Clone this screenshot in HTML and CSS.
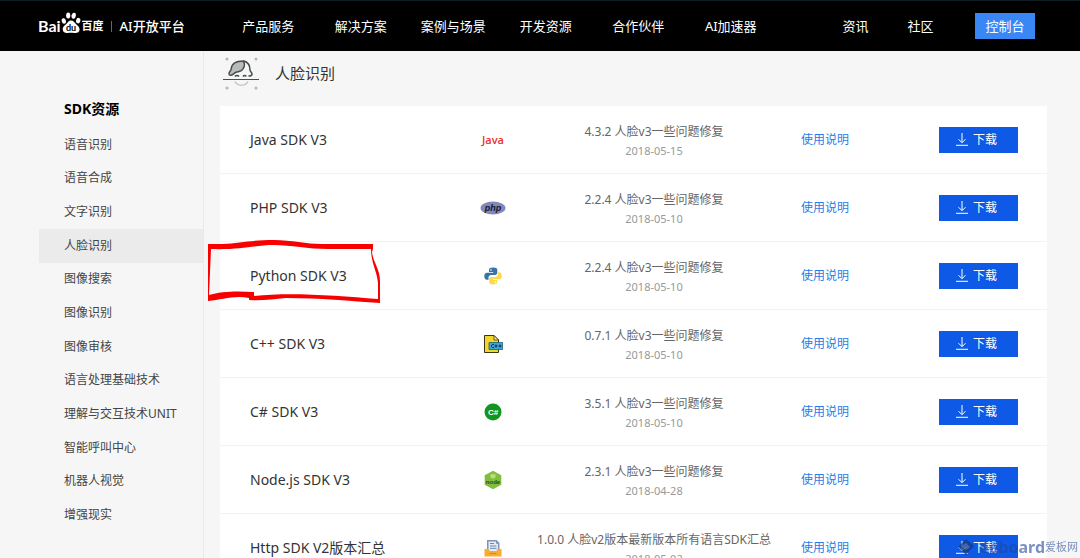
FILE: index.html
```html
<!DOCTYPE html>
<html lang="zh-CN">
<head>
<meta charset="utf-8">
<title>SDK资源 - 人脸识别</title>
<link rel="stylesheet" href="styles.css">
</head>
<body>
<header class="topbar">
  <a class="brand" href="#">
    <span class="brand-latin">Bai</span>
    <svg class="paw" width="20" height="22" viewBox="0 0 20 22" aria-hidden="true">
      <g fill="#fff">
        <ellipse cx="2.8" cy="9" rx="2.1" ry="2.8" transform="rotate(-15 2.8 9)"/>
        <ellipse cx="7.2" cy="3.6" rx="2.1" ry="3"/>
        <ellipse cx="12.7" cy="3.8" rx="2.1" ry="3" transform="rotate(12 12.7 3.8)"/>
        <ellipse cx="17.2" cy="8.6" rx="2.1" ry="2.8" transform="rotate(15 17.2 8.6)"/>
        <path d="M10 8.500c-2.500 0-3.200 2.200-5 3.700-2.300 1.900-3.700 3.200-3.200 5.800.5 2.600 2.600 3.100 4.900 2.900 2.300-.3 4.300-.3 6.600 0 2.800.3 5-.5 5.300-3.200.2-2.700-1.900-4-3.700-5.700-1.500-1.500-2.400-3.500-4.900-3.500z"/>
      </g>
      <text class="paw-text" x="10" y="19" text-anchor="middle">du</text>
    </svg>
    <span class="brand-cn">百度</span>
    <span class="brand-rule"></span>
    <span class="brand-sub">AI开放平台</span>
  </a>
  <nav class="nav">
    <a href="#">产品服务</a><a href="#">解决方案</a><a href="#">案例与场景</a><a href="#">开发资源</a><a href="#">合作伙伴</a><a href="#">AI加速器</a>
  </nav>
  <nav class="nav-side">
    <a href="#">资讯</a><a href="#">社区</a>
  </nav>
  <button class="console" type="button">控制台</button>
</header>

<div class="layout">
  <aside class="sidebar">
    <h2 class="side-title">SDK资源</h2>
    <ul class="side-list">
      <li><a href="#">语音识别</a></li>
      <li><a href="#">语音合成</a></li>
      <li><a href="#">文字识别</a></li>
      <li><a class="active" href="#">人脸识别</a></li>
      <li><a href="#">图像搜索</a></li>
      <li><a href="#">图像识别</a></li>
      <li><a href="#">图像审核</a></li>
      <li><a href="#">语言处理基础技术</a></li>
      <li><a href="#">理解与交互技术UNIT</a></li>
      <li><a href="#">智能呼叫中心</a></li>
      <li><a href="#">机器人视觉</a></li>
      <li><a href="#">增强现实</a></li>
    </ul>
  </aside>

  <main class="content">
    <div class="heading">
      <svg width="38" height="36" viewBox="0 0 38 36" aria-hidden="true">
        <g fill="#b5b7b8"><circle cx="5" cy="4" r="1.5"/><circle cx="34" cy="4" r="1.5"/><circle cx="5" cy="33" r="1.5"/><circle cx="34" cy="33" r="1.5"/></g>
        <path d="M7 18.500c0-2 2-2.500 2.200-4.500C9.500 9 13 6 21.500 6c2.500 5-.5 10.500-6.500 11-3 .3-4 3.500-6.500 3.300-1 0-1.500-.8-1.500-1.800z" fill="#b6bcbc" stroke="#4a4c4d" stroke-width="1.5"/>
        <path d="M22 6c4 1.200 6 4.500 6 9 .2 1.800 2.200 2.500 2 4.300-.2 1.500-1.700 1.700-3.500 1.700M13 21.500c.8-1.200 3-1.200 4 0M21 21.500c.8-1.200 2.500-1.200 3.300 0" fill="none" stroke="#4a4c4d" stroke-width="1.5"/>
        <path d="M1 24.500h36" stroke="#4a4c4d" stroke-width="1.2"/>
        <path d="M13 26.500c2.500 5 10.500 5 13 0" fill="none" stroke="#b9bbbc" stroke-width="1.2"/>
      </svg>
      <h1>人脸识别</h1>
    </div>

    <ul class="panel">
      <li class="row">
        <h3>Java SDK V3</h3>
        <span class="icon"><span class="java">Java</span></span>
        <div class="info"><p>4.3.2 人脸v3一些问题修复</p><time>2018-05-15</time></div>
        <a class="doc" href="#">使用说明</a>
        <button class="download" type="button"><svg class="arrow" viewBox="0 0 12 13"><path d="M6 0v9.500M2.500 6.200L6 9.700l3.500-3.500M0 12.300h12"/></svg>下载</button>
      </li>
      <li class="row">
        <h3>PHP SDK V3</h3>
        <span class="icon"><svg width="26" height="14" viewBox="0 0 26 14"><ellipse cx="13" cy="7" rx="12.5" ry="6.5" fill="#8288b8"/><text class="php" x="13" y="10" text-anchor="middle">php</text></svg></span>
        <div class="info"><p>2.2.4 人脸v3一些问题修复</p><time>2018-05-10</time></div>
        <a class="doc" href="#">使用说明</a>
        <button class="download" type="button"><svg class="arrow" viewBox="0 0 12 13"><path d="M6 0v9.500M2.500 6.200L6 9.700l3.500-3.500M0 12.300h12"/></svg>下载</button>
      </li>
      <li class="row">
        <h3>Python SDK V3</h3>
        <span class="icon"><svg width="18" height="18" viewBox="0 0 18 18"><path d="M9 .5C6 .5 5 1.500 5 3v2h4.300v.8H3C1.200 5.800.3 7.200.3 9.200s1 3.500 2.500 3.500H4.500v-2c0-1.600 1.200-2.700 2.700-2.700h4c1.200 0 2.100-1 2.100-2.200V3C13.300 1.300 12 .5 9 .5z" fill="#3773a8"/><path d="M9.200 17.500c3 0 4-1 4-2.500v-2H8.900v-.8h6.300c1.800 0 2.600-1.400 2.600-3.400s-1-3.500-2.500-3.500h-1.400v2c0 1.600-1.200 2.800-2.700 2.800h-4c-1.200 0-2.100 1-2.100 2.200V15c0 1.700 1.300 2.500 4.100 2.500z" fill="#ffd94d"/><circle cx="7" cy="3" r=".8" fill="#fff"/><circle cx="11.3" cy="15" r=".8" fill="#fff"/></svg></span>
        <div class="info"><p>2.2.4 人脸v3一些问题修复</p><time>2018-05-10</time></div>
        <a class="doc" href="#">使用说明</a>
        <button class="download" type="button"><svg class="arrow" viewBox="0 0 12 13"><path d="M6 0v9.500M2.500 6.200L6 9.700l3.500-3.500M0 12.300h12"/></svg>下载</button>
        <svg class="mark" width="176" height="66" viewBox="0 0 176 66" aria-hidden="true"><path d="M1 5h14C34 4 44 1 67 1c18 0 32 4 48 4h51v5l-1 3c1 10 8 17 8 29v22c-30-2-60-5-94-5-13 1-24 3-37 2v-2C27 56 15 61 1 62zM4 10L2 56c12-4 30-4 45-3v4c38-4 84 0 124 3V44c-1-12-7-20-7-34h-43C101 10 84 6 67 6 47 6 34 11 4 10z" fill="#f90000" fill-rule="evenodd"/></svg>
      </li>
      <li class="row">
        <h3>C++ SDK V3</h3>
        <span class="icon"><svg width="20" height="20" viewBox="0 0 20 20"><path d="M1.500 1.500h9.500l4.500 4.500v12.500h-14z" fill="#f4d52b" stroke="#3b3616" stroke-width="1"/><path d="M11 1.500V6h4.500z" fill="#fff0a0" stroke="#3b3616" stroke-width=".8"/><path d="M6 8.500h13.500v7H6z" fill="#39a9dc" stroke="#174c69" stroke-width=".7"/><path d="M11 10.500c-3-1-3.800 3.800 0 3M11.500 12h3M13 10.500v3M15.500 12h3M17 10.500v3" fill="none" stroke="#102b3a" stroke-width="1"/></svg></span>
        <div class="info"><p>0.7.1 人脸v3一些问题修复</p><time>2018-05-10</time></div>
        <a class="doc" href="#">使用说明</a>
        <button class="download" type="button"><svg class="arrow" viewBox="0 0 12 13"><path d="M6 0v9.500M2.500 6.200L6 9.700l3.500-3.500M0 12.300h12"/></svg>下载</button>
      </li>
      <li class="row">
        <h3>C# SDK V3</h3>
        <span class="icon"><svg width="18" height="18" viewBox="0 0 18 18"><circle cx="9" cy="9" r="8.5" fill="#119620"/><text class="csharp" x="9" y="12" text-anchor="middle">C#</text></svg></span>
        <div class="info"><p>3.5.1 人脸v3一些问题修复</p><time>2018-05-10</time></div>
        <a class="doc" href="#">使用说明</a>
        <button class="download" type="button"><svg class="arrow" viewBox="0 0 12 13"><path d="M6 0v9.500M2.500 6.200L6 9.700l3.500-3.500M0 12.300h12"/></svg>下载</button>
      </li>
      <li class="row">
        <h3>Node.js SDK V3</h3>
        <span class="icon"><svg width="18" height="20" viewBox="0 0 18 20"><path d="M9 .8l8.300 4.500v9.400L9 19.200.7 14.700V5.300z" fill="#83bd3c"/><path d="M6.500 4.200h5v3l-2.500 1.500-2.500-1.500z" fill="#b9df85"/><text class="node" x="9" y="14" text-anchor="middle">node</text></svg></span>
        <div class="info"><p>2.3.1 人脸v3一些问题修复</p><time>2018-04-28</time></div>
        <a class="doc" href="#">使用说明</a>
        <button class="download" type="button"><svg class="arrow" viewBox="0 0 12 13"><path d="M6 0v9.500M2.500 6.200L6 9.700l3.500-3.500M0 12.300h12"/></svg>下载</button>
      </li>
      <li class="row">
        <h3>Http SDK V2版本汇总</h3>
        <span class="icon"><svg width="18" height="18" viewBox="0 0 18 18"><path d="M3 1h9.500L15.500 4v9H3z" fill="#8094b8"/><path d="M4.500 2.500H12v2.300h2V12H4.500z" fill="#e5ebf5"/><path d="M6 4.500h4M6 7h6.500M6 9.300h6.500" stroke="#7087b0" stroke-width="1"/><path d="M.5 10h4l1.200 2h6.600l1.200-2h4v7.500H.5z" fill="#f6ae31"/><path d="M5.500 14.500h7" stroke="#d9871f" stroke-width="1.2"/></svg></span>
        <div class="info"><p>1.0.0 人脸v2版本最新版本所有语言SDK汇总</p><time>2018-05-02</time></div>
        <a class="doc" href="#">使用说明</a>
        <button class="download" type="button"><svg class="arrow" viewBox="0 0 12 13"><path d="M6 0v9.500M2.500 6.200L6 9.700l3.500-3.500M0 12.300h12"/></svg>下载</button>
      </li>
    </ul>
  </main>
</div>

<div class="watermark">
  <svg width="18" height="18" viewBox="0 0 18 18" aria-hidden="true"><path d="M9 1l8 7-8 9-8-8z" fill="#1d376f"/><path d="M5 8l4-3 4 4-4 3z" fill="#52709f"/></svg>
  <span class="watermark-latin">eeboard</span><span>爱板网</span>
</div>
</body>
</html>
```

FILE: styles.css
```css
* { box-sizing: border-box; }

body {
  margin: 0;
  height: 100vh;
  overflow: hidden;
  display: flex;
  flex-direction: column;
  background: #f6f6f6;
  color: #333;
  font-family: "Noto Sans", "Noto Sans CJK SC", sans-serif;
  font-size: 12px;
  line-height: 18px;
}

h1, h2, h3, p, ul { margin: 0; padding: 0; font-weight: 400; }
ul { list-style: none; }
a { color: inherit; text-decoration: none; }
button { border: 0; padding: 0; font: inherit; color: #fff; cursor: pointer; }
svg { display: block; flex: none; }

.topbar {
  flex: none;
  display: flex;
  align-items: center;
  height: 51px;
  padding: 0 45px 0 38px;
  border-top: 1px solid #0b1c24;
  background: #000;
  color: #fff;
  font-size: 13px;
}
.brand { display: flex; align-items: center; width: 184px; white-space: nowrap; }
.brand-latin { font: 700 16px/20px Lato, sans-serif; }
.paw { margin-bottom: 6px; }
.paw-text { font: 700 9px Lato, sans-serif; fill: #000; }
.brand-cn { margin-left: 1px; font-weight: 700; font-size: 11px; }
.brand-rule { width: 1px; height: 11px; margin: 0 8px 0 7px; background: #666; }
.brand-sub { font-weight: 500; }

.nav { flex: 1; display: grid; grid-template-columns: repeat(6, 1fr); text-align: center; }
.nav-side { display: grid; grid-template-columns: 65px 65px; margin-left: 46px; text-align: center; }
.console { width: 60px; height: 26px; margin-left: 22px; background: #3887f5; }

.layout { flex: 1; min-height: 0; display: flex; }
.sidebar { flex: none; width: 204px; padding: 48px 0 0 39px; border-right: 1px solid #e9e9e9; }
.side-title { padding-left: 25px; font-size: 14px; font-weight: 700; line-height: 20px; color: #000; }
.side-list { display: grid; grid-auto-rows: 1fr; height: 404px; margin-top: 9px; }
.side-list a { display: flex; align-items: center; height: 100%; padding-left: 25px; color: #444; }
.side-list .active { background: #ebebeb; }

.content { flex: 1; min-width: 0; padding: 0 33px 0 16px; }
.heading { display: flex; align-items: center; gap: 15px; height: 55px; padding: 0 0 12px 2px; }
.heading h1 { font-size: 15px; line-height: 22px; }

.panel { background: #fff; }
.row {
  position: relative;
  display: grid;
  grid-template-columns: 213fr 60px 262fr 80px 153px;
  align-items: center;
  height: 68px;
  padding: 0 29px 0 30px;
  border-bottom: 1px solid #f3f3f3;
}
.row h3 { font-size: 14px; line-height: 20px; white-space: nowrap; }
.icon { display: flex; justify-content: center; }
.java { font: 600 11px/16px "Open Sans", sans-serif; color: #e8312d; }
.php { font: italic 700 9px "Liberation Sans", sans-serif; fill: #15162b; }
.csharp { font: 700 8px "Liberation Sans", sans-serif; fill: #fff; }
.node { font: 700 6px "Liberation Sans", sans-serif; fill: #1f4a1b; }
.info { padding-top: 2px; text-align: center; color: #666; white-space: nowrap; }
.info p { line-height: 20px; }
.info time { display: block; font-size: 11px; color: #999; }
.doc { padding-top: 1px; text-align: center; color: #2a7bea; }
.download {
  display: flex;
  align-items: center;
  justify-content: center;
  justify-self: end;
  gap: 5px;
  width: 79px;
  height: 26px;
  padding-right: 4px;
  background: #0e5ae6;
}
.arrow { width: 12px; height: 13px; fill: none; stroke: #fff; stroke-width: 1; }
.mark { position: absolute; left: -13px; top: -3px; }

.watermark {
  position: fixed;
  right: 2px;
  bottom: 2px;
  display: flex;
  align-items: center;
  font-size: 11px;
  color: rgba(35, 70, 150, 0.6);
  pointer-events: none;
}
.watermark svg { margin-right: 4px; opacity: 0.7; }
.watermark-latin { font-size: 16px; font-weight: 700; }
```
